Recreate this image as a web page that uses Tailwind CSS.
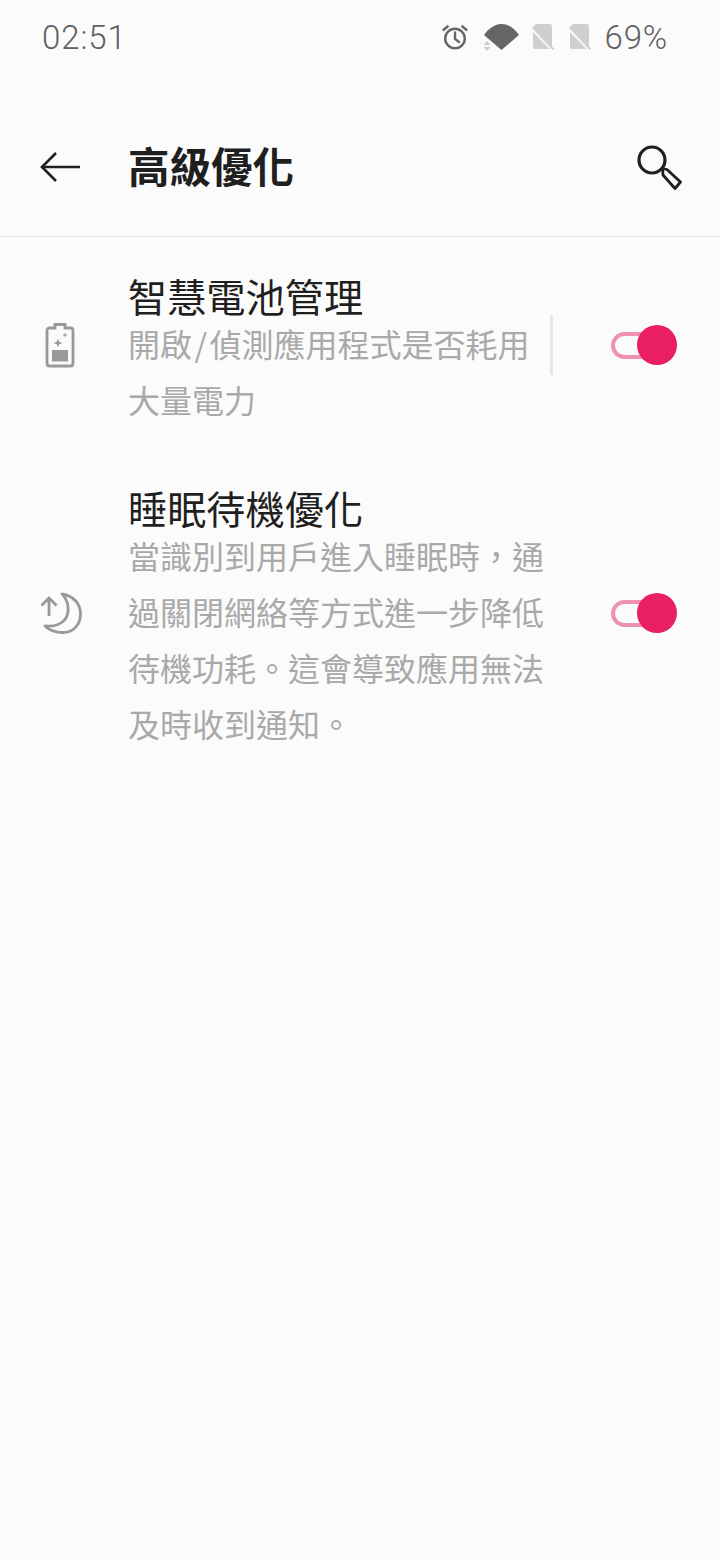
<!DOCTYPE html>
<html lang="zh-Hant">
  <head>
    <meta charset="UTF-8" />
    <meta name="viewport" content="width=device-width, initial-scale=1.0" />
    <title>高級優化</title>
    <script src="https://cdn.jsdelivr.net/npm/@tailwindcss/browser@4"></script>
  </head>
  <body class="w-[720px] h-[1560px] bg-[#fbfbfb] overflow-hidden font-['Noto_Sans_CJK_TC','Noto_Sans_CJK_SC',sans-serif]">
    <!-- status bar -->
    <div class="h-[74px] flex items-center pl-[42px] pr-[52px] text-[#5f5f5f] font-['Roboto',sans-serif] font-light text-[33px] leading-none">
      <span class="tracking-[0.9px]">02:51</span>
      <div class="ml-auto flex items-center">
        <svg class="w-[28px] h-[28px]" viewBox="0 0 28 28" fill="none" stroke="#666666" stroke-width="2.400">
          <circle cx="14" cy="15.500" r="9.800" />
          <path d="M14 9.500v6.500l4 3" stroke-linecap="round" />
          <path d="M1.800 7.500 7.500 2.800M26.200 7.500 20.500 2.800" />
        </svg>
        <svg class="ml-[13px] w-[38px] h-[28px]" viewBox="0 0 38 28">
          <path d="M2 12C7 5 13 1 19.500 1S32 5 37 12L19.500 27Z" fill="#666666" />
          <path d="M1.500 22 5 18l3.500 4ZM1.500 24 5 28l3.500-4Z" fill="#cdcdcd" />
        </svg>
        <svg class="ml-[11px] w-[24px] h-[28px]" viewBox="0 0 24 28">
          <path d="M6 1h13a2 2 0 0 1 2 2v21L6 8 3 5V4a3 3 0 0 1 3-3ZM2 9l16.500 17H4a2 2 0 0 1-2-2Z" fill="#cfcfcf" />
          <path d="M1.500 4 22.500 26.500" stroke="#cfcfcf" stroke-width="2" />
        </svg>
        <svg class="ml-[13px] w-[24px] h-[28px]" viewBox="0 0 24 28">
          <path d="M6 1h13a2 2 0 0 1 2 2v21L6 8 3 5V4a3 3 0 0 1 3-3ZM2 9l16.500 17H4a2 2 0 0 1-2-2Z" fill="#cfcfcf" />
          <path d="M1.500 4 22.500 26.500" stroke="#cfcfcf" stroke-width="2" />
        </svg>
        <span class="ml-[13px] tracking-[0.8px]">69%</span>
      </div>
    </div>

    <!-- toolbar -->
    <header class="h-[163px] pt-[24px] flex items-center pl-[40px] pr-[37px] border-b border-[#e2e2e2]">
      <svg class="w-[41px] h-[32px] shrink-0" viewBox="0 0 41 32" fill="none" stroke="#1f1f1f" stroke-width="2.600">
        <path d="M1.500 16H40" />
        <path d="M16 2 2 16l14 14" />
      </svg>
      <h1 class="ml-[47px] -mt-[4px] text-[41.500px] leading-[48px] font-bold text-[#1f1f1f]">高級優化</h1>
      <svg class="ml-auto mt-[4px] w-[46px] h-[48px]" viewBox="0 0 46 48" fill="none" stroke="#1f1f1f" stroke-width="3.200">
        <circle cx="15" cy="15" r="13" />
        <path d="M25.500 23.500 30 24.500 43.500 37 38 43.500 26 30Z" stroke-linejoin="round" stroke-width="2.800" />
      </svg>
    </header>

    <main class="pt-[38px] flex flex-col gap-[72px]">
      <div class="flex items-center pl-[40px] pr-[43px]">
        <svg class="w-[40px] h-[46px] shrink-0" viewBox="0 0 40 46" fill="none">
          <path d="M15 6V2.500h10V6h5.500a2.500 2.500 0 0 1 2.500 2.500v33a2.500 2.500 0 0 1-2.500 2.500h-21A2.500 2.500 0 0 1 7 41.500v-33A2.500 2.500 0 0 1 9.500 6Z" stroke="#999999" stroke-width="2.800" />
          <rect x="12" y="28" width="16" height="11.500" fill="#999999" />
          <path d="M18 16.500l1.200 3.300 3.300 1.200-3.300 1.200-1.200 3.300-1.200-3.300-3.300-1.200 3.300-1.200Z" fill="#999999" />
          <path d="M25 10.500l.7 1.800 1.800.7-1.800.7-.7 1.800-.7-1.800-1.800-.7 1.800-.7Z" fill="#999999" />
        </svg>
        <div class="ml-[48px] w-[422px] shrink-0 -mb-3">
          <h2 class="text-[39.200px] leading-[40px] text-[#1f1f1f]">智慧電池管理</h2>
          <p class="text-[32px] leading-[56px] text-[#a9a9a9]">開啟<span class="mx-[2.500px]">/</span>偵測應用程式是否耗用<br />大量電力</p>
        </div>
        <div class="w-[3px] h-[60px] bg-[#e6e6e6]"></div>
        <div class="ml-auto relative w-[66px] h-[40px] flex items-center">
          <div class="w-[52px] h-[27px] rounded-full border-[4px] border-[#ee92b1]"></div>
          <div class="absolute right-0 top-0 w-[40px] h-[40px] rounded-full bg-[#e91e63]"></div>
        </div>
      </div>

      <div class="flex items-center pl-[40px] pr-[43px]">
        <svg class="w-[42px] h-[42px] shrink-0" viewBox="0 0 42 42" fill="none" stroke="#999999" stroke-width="2.800">
          <path d="M9 24V6.500M1.500 13.500 9 6l7.500 7.500" />
          <path d="M22 2C34 4 40.500 12 40.500 22 40.500 33 33 40.500 23 40.500 15 40.500 9 38 5 34 14 35 22 32 26 26 30 18 28 8 22 2Z" stroke-linejoin="round" />
        </svg>
        <div class="ml-[46px] w-[422px] shrink-0 -mb-3">
          <h2 class="text-[39.200px] leading-[40px] text-[#1f1f1f]">睡眠待機優化</h2>
          <p class="text-[32px] leading-[56px] text-[#a9a9a9]">當識別到用戶進入睡眠時，通過關閉網絡等方式進一步降低待機功耗。這會導致應用無法及時收到通知。</p>
        </div>
        <div class="ml-auto relative w-[66px] h-[40px] flex items-center">
          <div class="w-[52px] h-[27px] rounded-full border-[4px] border-[#ee92b1]"></div>
          <div class="absolute right-0 top-0 w-[40px] h-[40px] rounded-full bg-[#e91e63]"></div>
        </div>
      </div>
    </main>
  </body>
</html>
